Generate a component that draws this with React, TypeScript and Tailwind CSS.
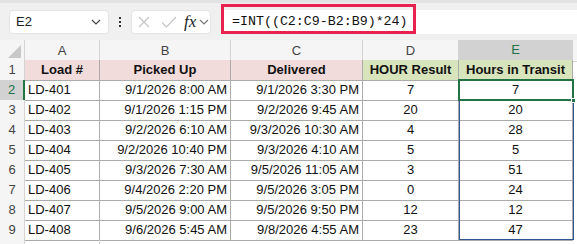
const ROWS = [
  ["LD-401", "9/1/2026 8:00 AM", "9/1/2026 3:30 PM", "7", "7"],
  ["LD-402", "9/1/2026 1:15 PM", "9/2/2026 9:45 AM", "20", "20"],
  ["LD-403", "9/2/2026 6:10 AM", "9/3/2026 10:30 AM", "4", "28"],
  ["LD-404", "9/2/2026 10:40 PM", "9/3/2026 4:10 AM", "5", "5"],
  ["LD-405", "9/3/2026 7:30 AM", "9/5/2026 11:05 AM", "3", "51"],
  ["LD-406", "9/4/2026 2:20 PM", "9/5/2026 3:05 PM", "0", "24"],
  ["LD-407", "9/5/2026 9:00 AM", "9/5/2026 9:50 PM", "12", "12"],
  ["LD-408", "9/6/2026 5:45 AM", "9/8/2026 4:55 AM", "23", "47"],
];

const COLS = ["A", "B", "C", "D", "E"];
const HEADERS = ["Load #", "Picked Up", "Delivered", "HOUR Result", "Hours in Transit"];

const GRID = "grid grid-cols-[25px_75px_131px_132px_96px_114px_1fr]";

function Chevron({ className = "" }: { className?: string }) {
  return (
    <svg width="10" height="6" viewBox="0 0 10 6" className={className}>
      <path d="M1 1l4 4 4-4" fill="none" stroke="currentColor" strokeWidth="1.2" />
    </svg>
  );
}

function FormulaBar() {
  return (
    <div className="relative h-[40px] bg-[#f0f0f0] border-t-[3px] border-[#e3e3e3]">
      <div className="flex items-center h-full">
        {/* name box */}
        <div className="ml-[9px] w-[100px] h-[24px] bg-white rounded-[4px] border border-[#e4e4e4] flex items-center justify-between pl-[6px] pr-[7px]">
          <span className="text-[13px] text-[#222]">E2</span>
          <Chevron className="text-[#444]" />
        </div>
        {/* dots */}
        <div className="w-[22px] flex flex-col items-center gap-[2px]">
          <span className="w-[2px] h-[2px] bg-[#333]" />
          <span className="w-[2px] h-[2px] bg-[#333]" />
          <span className="w-[2px] h-[2px] bg-[#333]" />
        </div>
        {/* buttons */}
        <div className="w-[80px] h-[24px] bg-white rounded-[4px] border border-[#e4e4e4] flex items-center pl-[6px]">
          <svg width="12" height="12" viewBox="0 0 12 12">
            <path d="M1 1l10 10M11 1L1 11" stroke="#c4c4c4" strokeWidth="1.1" />
          </svg>
          <svg width="16" height="12" viewBox="0 0 16 12" className="ml-[11px]">
            <path d="M1 6.5l4.5 4.5L15 1" fill="none" stroke="#c4c4c4" strokeWidth="1.1" />
          </svg>
          <span className="ml-[7px] font-['Liberation_Serif'] italic text-[17px] leading-none text-[#222]">fx</span>
          <Chevron className="ml-[3px] text-[#777]" />
        </div>
        {/* formula input */}
        <div className="ml-[10px] flex-1 h-[24px] bg-white flex items-center pl-[11px]">
          <span className="font-['Liberation_Mono'] text-[13.3px] text-[#111]">
            =INT((C2:C9-B2:B9)*24)
          </span>
        </div>
      </div>
      <div className="absolute left-[221px] top-[1px] w-[195px] h-[30px] border-[3px] border-[#e8214f]" />
    </div>
  );
}

function ColumnHeader() {
  return (
    <div className={`${GRID} h-[20px] bg-[#f5f5f5] text-[13px] text-[#444]`}>
      <div className="relative border-r border-b border-[#d4d4d4]">
        <svg width="13" height="13" viewBox="0 0 13 13" className="absolute right-[3px] bottom-[3px]">
          <path d="M13 0L13 13L0 13Z" fill="#c8c8c8" />
        </svg>
      </div>
      {COLS.map((c) => (
        <div
          key={c}
          className={`flex items-center justify-center border-r border-[#d4d4d4] ${
            c === "E" ? "bg-[#d2d2d2] text-[#217346] border-b-2 border-b-[#217346]" : "border-b"
          }`}
        >
          {c}
        </div>
      ))}
      <div className="border-b border-[#d4d4d4]" />
    </div>
  );
}

export default function App() {
  return (
    <div className="w-[577px] h-[244px] overflow-hidden bg-white font-['Liberation_Sans',Arial,sans-serif]">
      <FormulaBar />
      <ColumnHeader />
      <div className="relative">
        {/* row 1: table headers */}
        <div className={`${GRID} h-[20px] text-[13px]`}>
          <div className="flex items-center justify-center bg-[#f5f5f5] text-[#444] border-r border-b border-[#d4d4d4]">
            1
          </div>
          {HEADERS.map((h, i) => (
            <div
              key={h}
              className={`flex items-center justify-center font-bold text-[#111] border-r border-b border-[#ababab] ${
                i < 3 ? "bg-[#f2dcdb]" : "bg-[#d8e4bc]"
              }`}
            >
              {h}
            </div>
          ))}
          <div />
        </div>

        {ROWS.map((r, idx) => {
          const n = idx + 2;
          const selected = n === 2;
          return (
            <div key={n} className={`${GRID} h-[20px] text-[13px] text-[#111]`}>
              <div
                className={`flex items-center justify-center border-b border-[#d4d4d4] ${
                  selected
                    ? "bg-[#d2d2d2] text-[#217346] border-r-2 border-r-[#217346]"
                    : "bg-[#f5f5f5] text-[#444] border-r"
                }`}
              >
                {n}
              </div>
              <div className="flex items-center pl-[3px] border-r border-b border-[#ababab]">{r[0]}</div>
              <div className="flex items-center justify-end pr-[3px] border-r border-b border-[#ababab]">{r[1]}</div>
              <div className="flex items-center justify-end pr-[3px] border-r border-b border-[#ababab]">{r[2]}</div>
              <div className="flex items-center justify-center border-r border-b border-[#ababab]">{r[3]}</div>
              <div className="flex items-center justify-center border-r border-b border-[#ababab]">{r[4]}</div>
              <div />
            </div>
          );
        })}

        {/* row 10, only its top edge is in view */}
        <div className={`${GRID} h-[20px]`}>
          <div className="bg-[#f5f5f5] border-r border-[#d4d4d4]" />
          <div className="border-r border-[#d4d4d4]" />
        </div>

        {/* spill range outline E2:E9 */}
        <div className="absolute left-[459px] top-[19px] w-[115px] h-[161px] border border-[#2f5597] pointer-events-none" />
        {/* active cell E2 */}
        <div className="absolute left-[458px] top-[19px] w-[116px] h-[22px] border-2 border-[#217346] pointer-events-none" />
        <div className="absolute left-[571px] top-[38px] w-[5px] h-[5px] bg-[#217346] border border-white" />
      </div>
    </div>
  );
}
